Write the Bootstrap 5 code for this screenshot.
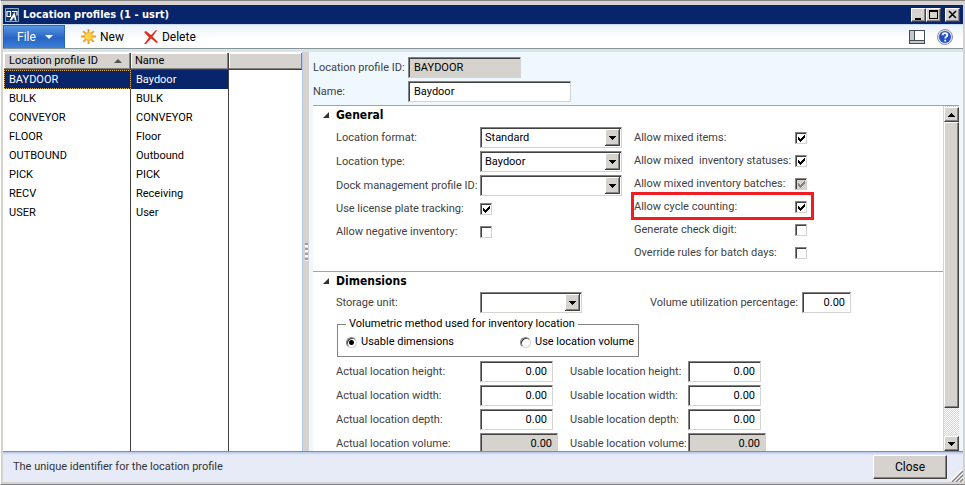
<!DOCTYPE html>
<html lang="en">
<head>
<meta charset="utf-8">
<meta name="viewport" content="width=device-width, initial-scale=1">
<title>Location profiles</title>
<link href="https://cdn.jsdelivr.net/npm/bootstrap@5.3.0/dist/css/bootstrap.min.css" rel="stylesheet">
<style>
:root{--face:#d6d3ce;--shade:#848284;--dark:#424142;--navy:#08246b;--pale:#eff7ff}
body{font:11px/14px Roboto,"Liberation Sans",sans-serif;color:#000;background:var(--face)}
button,input,select{font:inherit;color:#000;border-radius:0}
.window{height:100vh;background:var(--face);border-top:1px solid var(--shade);border-bottom:1px solid var(--shade);border-left:1px solid #fff;padding:4px 2px 2px}
.window > *{flex:none}
.window > main{flex:1 1 0;min-height:0}
.titlebar{height:19px;background:var(--navy);color:#fff;font-family:"DejaVu Sans Condensed","DejaVu Sans",sans-serif;font-weight:bold;padding:0 3px 0 2px;gap:4px}
.winbtn{width:15px;height:14px;padding:0;background:var(--face);border:1px solid;border-color:#fff var(--dark) var(--dark) #fff;box-shadow:inset -1px -1px var(--shade);display:flex}
.toolbar{height:25px;background:linear-gradient(#eaf2fd,#fff 60%);border-top:1px solid #c6dbef;border-bottom:1px solid #849694;font-size:12px}
.filebtn{width:62px;height:100%;border:1px solid #2864b8;border-bottom:0;color:#fff;background:linear-gradient(#5797e2,#2765c4 55%,#3c7fd9);padding:0 11px 0 13px}
.toolbtn{border:0;background:none;padding:0;gap:4px}
.help{margin:0 10px 0 12px}
.shadow-strip{height:3px;background:#dde2ec}
.list{width:299px;background:#fff;padding:1px 0 0 1px}
.list table{table-layout:fixed;width:100%;height:100%;border-collapse:separate;border-spacing:0}
.list th{height:17px;padding:0 4px;font-weight:normal;background:var(--face);border-bottom:1px solid var(--dark);border-right:1px solid var(--dark);box-shadow:inset -1px -1px var(--shade),inset 1px 1px #fff}
.list th:last-child,.list td:last-child{border-right:0}
.list td{height:19px;padding:0 5px;border-right:1px solid var(--dark)}
.list th:first-child,.list td:first-child{padding-left:5px}
.list .filler td{height:auto}
.list .chosen td:not(:last-child){background:var(--navy);color:#fff}
.list .chosen td:first-child{outline:1px dotted #d8b060;outline-offset:-1px}
.col-id{width:127px}.col-name{width:98px}
.splitter{width:7px;background:var(--face);border-left:1px solid #b5c7e7}
.grip-dots{width:3px;height:18px;background:repeating-linear-gradient(#9a9ab8 0 2px,#fff 2px 4px,var(--face) 4px 5px)}
.detail{background:var(--pale);padding:5px 4px 0 4px}
.flabel{color:#424142;white-space:pre}
.box{height:21px;border:1px solid;border-color:var(--shade) var(--face) var(--face) var(--shade);box-shadow:inset 1px 1px var(--dark);background:#fff;padding:0 5px;outline:0}
.box:read-only:not(select){background:var(--face)}
.id-box{width:113px}.name-box{width:163px}
.num{width:73px;text-align:right}
.num.wide{width:78px}
.num.narrow{width:49px}
select.box{appearance:none;padding:0 20px 0 4px;background:#fff url("data:image/svg+xml,%3Csvg xmlns='http://www.w3.org/2000/svg' width='15' height='17' shape-rendering='crispEdges'%3E%3Cpath fill='%23424142' d='M0 0h15v17H0z'/%3E%3Cpath fill='%23fff' d='M0 0h14v16H0z'/%3E%3Cpath fill='%23848284' d='M1 1h13v15H1z'/%3E%3Cpath fill='%23d6d3ce' d='M1 1h12v14H1z'/%3E%3Cpath d='M4 7h7v1H4zM5 8h5v1H5zM6 9h3v1H6zM7 10h1v1H7z'/%3E%3C/svg%3E") no-repeat right 1px top 1px}
.sel-lg{width:142px}.sel-sm{width:102px}
.tick{appearance:none;width:12px;height:12px;margin:0;border:1px solid;border-color:var(--shade) var(--face) var(--face) var(--shade);box-shadow:inset 1px 1px var(--dark);background:#fff no-repeat center}
.tick:checked{background-image:url("data:image/svg+xml,%3Csvg xmlns='http://www.w3.org/2000/svg' width='10' height='10' shape-rendering='crispEdges'%3E%3Cpath d='M2 4h1v3H2zM3 5h1v3H3zM4 6h1v3H4zM5 5h1v3H5zM6 4h1v3H6zM7 3h1v3H7zM8 2h1v3H8z'/%3E%3C/svg%3E")}
.tick:disabled{background-color:var(--face)}
.tick:disabled:checked{background-image:url("data:image/svg+xml,%3Csvg xmlns='http://www.w3.org/2000/svg' width='10' height='10' shape-rendering='crispEdges'%3E%3Cpath fill='%23848284' d='M2 4h1v3H2zM3 5h1v3H3zM4 6h1v3H4zM5 5h1v3H5zM6 4h1v3H6zM7 3h1v3H7zM8 2h1v3H8z'/%3E%3C/svg%3E")}
.headrow .flabel{width:95px}
.pane{border-top:1px solid #a5a2a5;background:#fff;margin-top:3px}
.sections{overflow:hidden}
.fast{padding:0 0 8px 23px}
.fast + .fast{border-top:1px solid #a5a2a5}
.fast h2{font-family:"DejaVu Sans Condensed","DejaVu Sans",sans-serif;font-size:12px;line-height:14px;height:18px;font-weight:bold;margin:0 0 2px -13px;gap:7px}
.fields{display:grid;gap:3px}
.left-stack{padding-top:1px}
.lcol{width:144px}
.rcol{width:118px}
.ucol{width:172px}
.line20{height:20px}
.checks{display:grid;gap:1px}
.checks > div{height:22px;padding-top:2px}
.checks .flabel{width:161px}
.marked{outline:3px solid #ef1c24}
.method{width:302px;border:1px solid var(--shade);padding:4px 0 7px 8px;margin:4px 0 4px 1px;white-space:nowrap}
.method legend{float:none;width:auto;font-size:11px;line-height:14px;margin:0;padding:0 3px}
.dot{appearance:none;width:11px;height:11px;margin:0;border:1px solid;border-color:var(--shade) var(--face) var(--face) var(--shade);border-radius:50%;background:#fff;box-shadow:inset 1px 1px var(--dark)}
.dot:checked{background:radial-gradient(circle,#000 2px,#fff 3px)}
.opt-a{width:174px}
.scroller{width:16px;background:repeating-conic-gradient(#d6d3ce 0 25%,#fff 0 50%) 0 0/2px 2px;padding-top:1px;border-left:1px solid #d6d3ce}
.scroller .raised{flex:none;height:15px}
.raised{background:var(--face);border:1px solid;border-color:#fff var(--dark) var(--dark) #fff;box-shadow:inset -1px -1px var(--shade);padding:0}
.rail{min-height:0}
.scroller .rail .thumb{height:91%}
.statusbar{height:31px;background:linear-gradient(#b5c3e7,#e7ebf7 3px);border-top:1px solid #848e9c;padding-left:10px;color:#333}
.closebtn{width:74px;height:24px;font-size:12px;margin-right:3px}
svg{display:block;flex:none}
</style>
<script src="https://cdn.jsdelivr.net/npm/bootstrap@5.3.0/dist/js/bootstrap.bundle.min.js"></script>
</head>
<body>
<div class="window d-flex flex-column">
  <header class="titlebar d-flex align-items-center">
    <svg width="14" height="14" viewBox="0 0 14 14"><path fill="#123a6b" stroke="#8fa3bd" d="M.5.5h13v13H.5z"/><path fill="none" stroke="#fff" stroke-width="1.200" d="M2 3.500h3.500v5H2zM7 3.500h5v4"/><path fill="#fff" d="M9.500 4l2 8.500h-1.500L9 9l-2.500 3.500H4.500z"/></svg>
    <span class="flex-grow-1">Location profiles (1 - usrt)</span>
    <div class="d-flex">
      <button class="winbtn" aria-label="Minimize"><svg width="13" height="12"><path d="M3 9h6v2H3z"/></svg></button>
      <button class="winbtn" aria-label="Maximize"><svg width="13" height="12" shape-rendering="crispEdges"><path fill-rule="evenodd" d="M2 1h9v9H2zM3 3v6h7V3z"/></svg></button>
      <button class="winbtn ms-1" aria-label="Close window"><svg width="13" height="12"><path stroke="#000" stroke-width="1.600" d="M3 2l7 7M10 2L3 9"/></svg></button>
    </div>
  </header>
  <nav class="toolbar d-flex align-items-center">
    <button class="filebtn d-flex align-items-center justify-content-between">File <svg width="8" height="4"><path fill="#fff" d="M0 0h8L4 4z"/></svg></button>
    <button class="toolbtn d-flex align-items-center ms-3"><svg width="15" height="15" viewBox="0 0 15 15"><path stroke="#f09a18" stroke-width="1.800" d="M7.500 0v15M0 7.500h15M2.200 2.200l10.600 10.600M12.800 2.200L2.200 12.800"/><circle cx="7.500" cy="7.500" r="4" fill="#ffd24a" stroke="#f5a828"/></svg>New</button>
    <button class="toolbtn d-flex align-items-center ms-3 ps-1"><svg width="14" height="14" viewBox="0 0 14 14"><path fill="#e0301e" d="M0 2l2-1 5 4 5-5 1 .5L8.500 6.500 14 12l-1.500 1L7 8.500 2 14H0l5-6.500z"/></svg>Delete</button>
    <button class="toolbtn ms-auto" aria-label="Layout"><svg width="16" height="14" shape-rendering="crispEdges"><path fill="#424d5a" d="M0 0h16v14H0z"/><path fill="#fff" d="M1 1h14v9H1z"/><path fill="#c4c7cc" d="M1 1h4v9H1zM1 11h14v2H1z"/><path fill="#424d5a" d="M5 1h1v9H5z"/></svg></button>
    <button class="toolbtn help" aria-label="Help"><svg width="16" height="16" viewBox="0 0 16 16"><circle cx="8" cy="8" r="7.500" fill="#e4e4ec" stroke="#8e8ea0"/><circle cx="8" cy="8" r="6" fill="#2450c8"/><path fill="none" stroke="#fff" stroke-width="1.800" d="M5.500 6.300C5.700 3.400 10.700 3.600 10.300 6.300 10.100 7.600 8.200 7.600 8.200 9.600M8.200 10.800v1.800"/></svg></button>
  </nav>
  <div class="shadow-strip"></div>
  <main class="d-flex overflow-hidden">
    <div class="list flex-shrink-0">
      <table>
        <colgroup><col class="col-id"><col class="col-name"><col></colgroup>
        <thead><tr><th scope="col"><div class="d-flex align-items-center justify-content-between pe-1">Location profile ID <svg width="8" height="4"><path fill="#555" d="M4 0l4 4H0z"/></svg></div></th><th scope="col">Name</th><th></th></tr></thead>
        <tbody>
          <tr class="chosen"><td>BAYDOOR</td><td>Baydoor</td><td></td></tr>
          <tr><td>BULK</td><td>BULK</td><td></td></tr>
          <tr><td>CONVEYOR</td><td>CONVEYOR</td><td></td></tr>
          <tr><td>FLOOR</td><td>Floor</td><td></td></tr>
          <tr><td>OUTBOUND</td><td>Outbound</td><td></td></tr>
          <tr><td>PICK</td><td>PICK</td><td></td></tr>
          <tr><td>RECV</td><td>Receiving</td><td></td></tr>
          <tr><td>USER</td><td>User</td><td></td></tr>
          <tr class="filler"><td></td><td></td><td></td></tr>
        </tbody>
      </table>
    </div>
    <div class="splitter flex-shrink-0 d-flex align-items-center justify-content-center"><div class="grip-dots"></div></div>
    <div class="detail flex-grow-1 d-flex flex-column overflow-hidden">
      <div class="headrow fields flex-shrink-0">
        <div class="d-flex align-items-center"><label class="flabel" for="pid">Location profile ID:</label><input class="box id-box" id="pid" value="BAYDOOR" readonly></div>
        <div class="d-flex align-items-center"><label class="flabel" for="pname">Name:</label><input class="box name-box" id="pname" value="Baydoor"></div>
      </div>
      <div class="pane d-flex flex-grow-1 overflow-hidden">
        <div class="sections flex-grow-1">
          <section class="fast">
            <h2 class="d-flex align-items-center"><svg width="6" height="6"><path fill="#333" d="M6 0v6H0z"/></svg>General</h2>
            <div class="d-flex">
              <div class="fields left-stack align-content-start">
                <div class="d-flex align-items-center"><label class="flabel lcol" for="fmt">Location format:</label><select class="box sel-lg" id="fmt"><option>Standard</option></select></div>
                <div class="d-flex align-items-center"><label class="flabel lcol" for="typ">Location type:</label><select class="box sel-lg" id="typ"><option>Baydoor</option></select></div>
                <div class="d-flex align-items-center"><label class="flabel lcol" for="dock">Dock management profile ID:</label><select class="box sel-lg" id="dock"><option></option></select></div>
                <div class="d-flex align-items-center line20"><label class="flabel lcol" for="lic">Use license plate tracking:</label><input class="tick" type="checkbox" id="lic" checked></div>
                <div class="d-flex align-items-center line20"><label class="flabel lcol" for="neg">Allow negative inventory:</label><input class="tick" type="checkbox" id="neg"></div>
              </div>
              <div class="checks ms-2 ps-1">
                <div class="d-flex align-items-center"><label class="flabel" for="c1">Allow mixed items:</label><input class="tick" type="checkbox" id="c1" checked></div>
                <div class="d-flex align-items-center"><label class="flabel" for="c2">Allow mixed  inventory statuses:</label><input class="tick" type="checkbox" id="c2" checked></div>
                <div class="d-flex align-items-center"><label class="flabel" for="c3">Allow mixed inventory batches:</label><input class="tick" type="checkbox" id="c3" checked disabled></div>
                <div class="d-flex align-items-center marked pe-1"><label class="flabel" for="c4">Allow cycle counting:</label><input class="tick" type="checkbox" id="c4" checked></div>
                <div class="d-flex align-items-center"><label class="flabel" for="c5">Generate check digit:</label><input class="tick" type="checkbox" id="c5"></div>
                <div class="d-flex align-items-center"><label class="flabel" for="c6">Override rules for batch days:</label><input class="tick" type="checkbox" id="c6"></div>
              </div>
            </div>
          </section>
          <section class="fast">
            <h2 class="d-flex align-items-center"><svg width="6" height="6"><path fill="#333" d="M6 0v6H0z"/></svg>Dimensions</h2>
            <div class="d-flex align-items-center">
              <label class="flabel lcol" for="unit">Storage unit:</label><select class="box sel-sm" id="unit"><option></option></select>
              <label class="flabel ucol text-end ms-5 pe-1" for="util">Volume utilization percentage:</label><input class="box num narrow" id="util" value="0.00">
            </div>
            <fieldset class="method">
              <legend>Volumetric method used for inventory location</legend>
              <div class="d-flex">
                <div class="d-flex align-items-center opt-a"><input class="dot me-1" type="radio" name="m" id="m1" checked><label for="m1">Usable dimensions</label></div>
                <div class="d-flex align-items-center"><input class="dot me-1" type="radio" name="m" id="m2"><label for="m2">Use location volume</label></div>
              </div>
            </fieldset>
            <div class="d-flex">
              <div class="fields">
                <div class="d-flex align-items-center"><label class="flabel lcol" for="ah">Actual location height:</label><input class="box num" id="ah" value="0.00"></div>
                <div class="d-flex align-items-center"><label class="flabel lcol" for="aw">Actual location width:</label><input class="box num" id="aw" value="0.00"></div>
                <div class="d-flex align-items-center"><label class="flabel lcol" for="ad">Actual location depth:</label><input class="box num" id="ad" value="0.00"></div>
                <div class="d-flex align-items-center"><label class="flabel lcol" for="av">Actual location volume:</label><input class="box num wide" id="av" value="0.00" readonly></div>
              </div>
              <div class="fields ms-2 ps-1">
                <div class="d-flex align-items-center"><label class="flabel rcol" for="uh">Usable location height:</label><input class="box num" id="uh" value="0.00"></div>
                <div class="d-flex align-items-center"><label class="flabel rcol" for="uw">Usable location width:</label><input class="box num" id="uw" value="0.00"></div>
                <div class="d-flex align-items-center"><label class="flabel rcol" for="ud">Usable location depth:</label><input class="box num" id="ud" value="0.00"></div>
                <div class="d-flex align-items-center"><label class="flabel rcol" for="uv">Usable location volume:</label><input class="box num wide" id="uv" value="0.00" readonly></div>
              </div>
            </div>
          </section>
        </div>
        <div class="scroller d-flex flex-column flex-shrink-0">
          <button class="raised d-flex align-items-center justify-content-center" aria-label="Scroll up"><svg width="7" height="4" shape-rendering="crispEdges"><path d="M3 0h1v1h1v1h1v1h1v1H0V3h1V2h1V1h1z"/></svg></button>
          <div class="rail flex-grow-1"><div class="raised thumb"></div></div>
          <button class="raised d-flex align-items-center justify-content-center" aria-label="Scroll down"><svg width="7" height="4" shape-rendering="crispEdges"><path d="M3 4h1V3h1V2h1V1h1V0H0v1h1v1h1v1h1z"/></svg></button>
        </div>
      </div>
    </div>
  </main>
  <footer class="statusbar d-flex align-items-center">
    <span class="flex-grow-1">The unique identifier for the location profile</span>
    <button class="raised closebtn">Close</button>
    <svg class="align-self-end" width="13" height="13"><path stroke="#fff" stroke-width="1.500" d="M1 12L12 1M5 12l7-7M9 12l3-3"/><path stroke="#848284" stroke-width="1.500" d="M2 13L13 2M6 13l7-7M10 13l3-3"/></svg>
  </footer>
</div>
</body>
</html>
